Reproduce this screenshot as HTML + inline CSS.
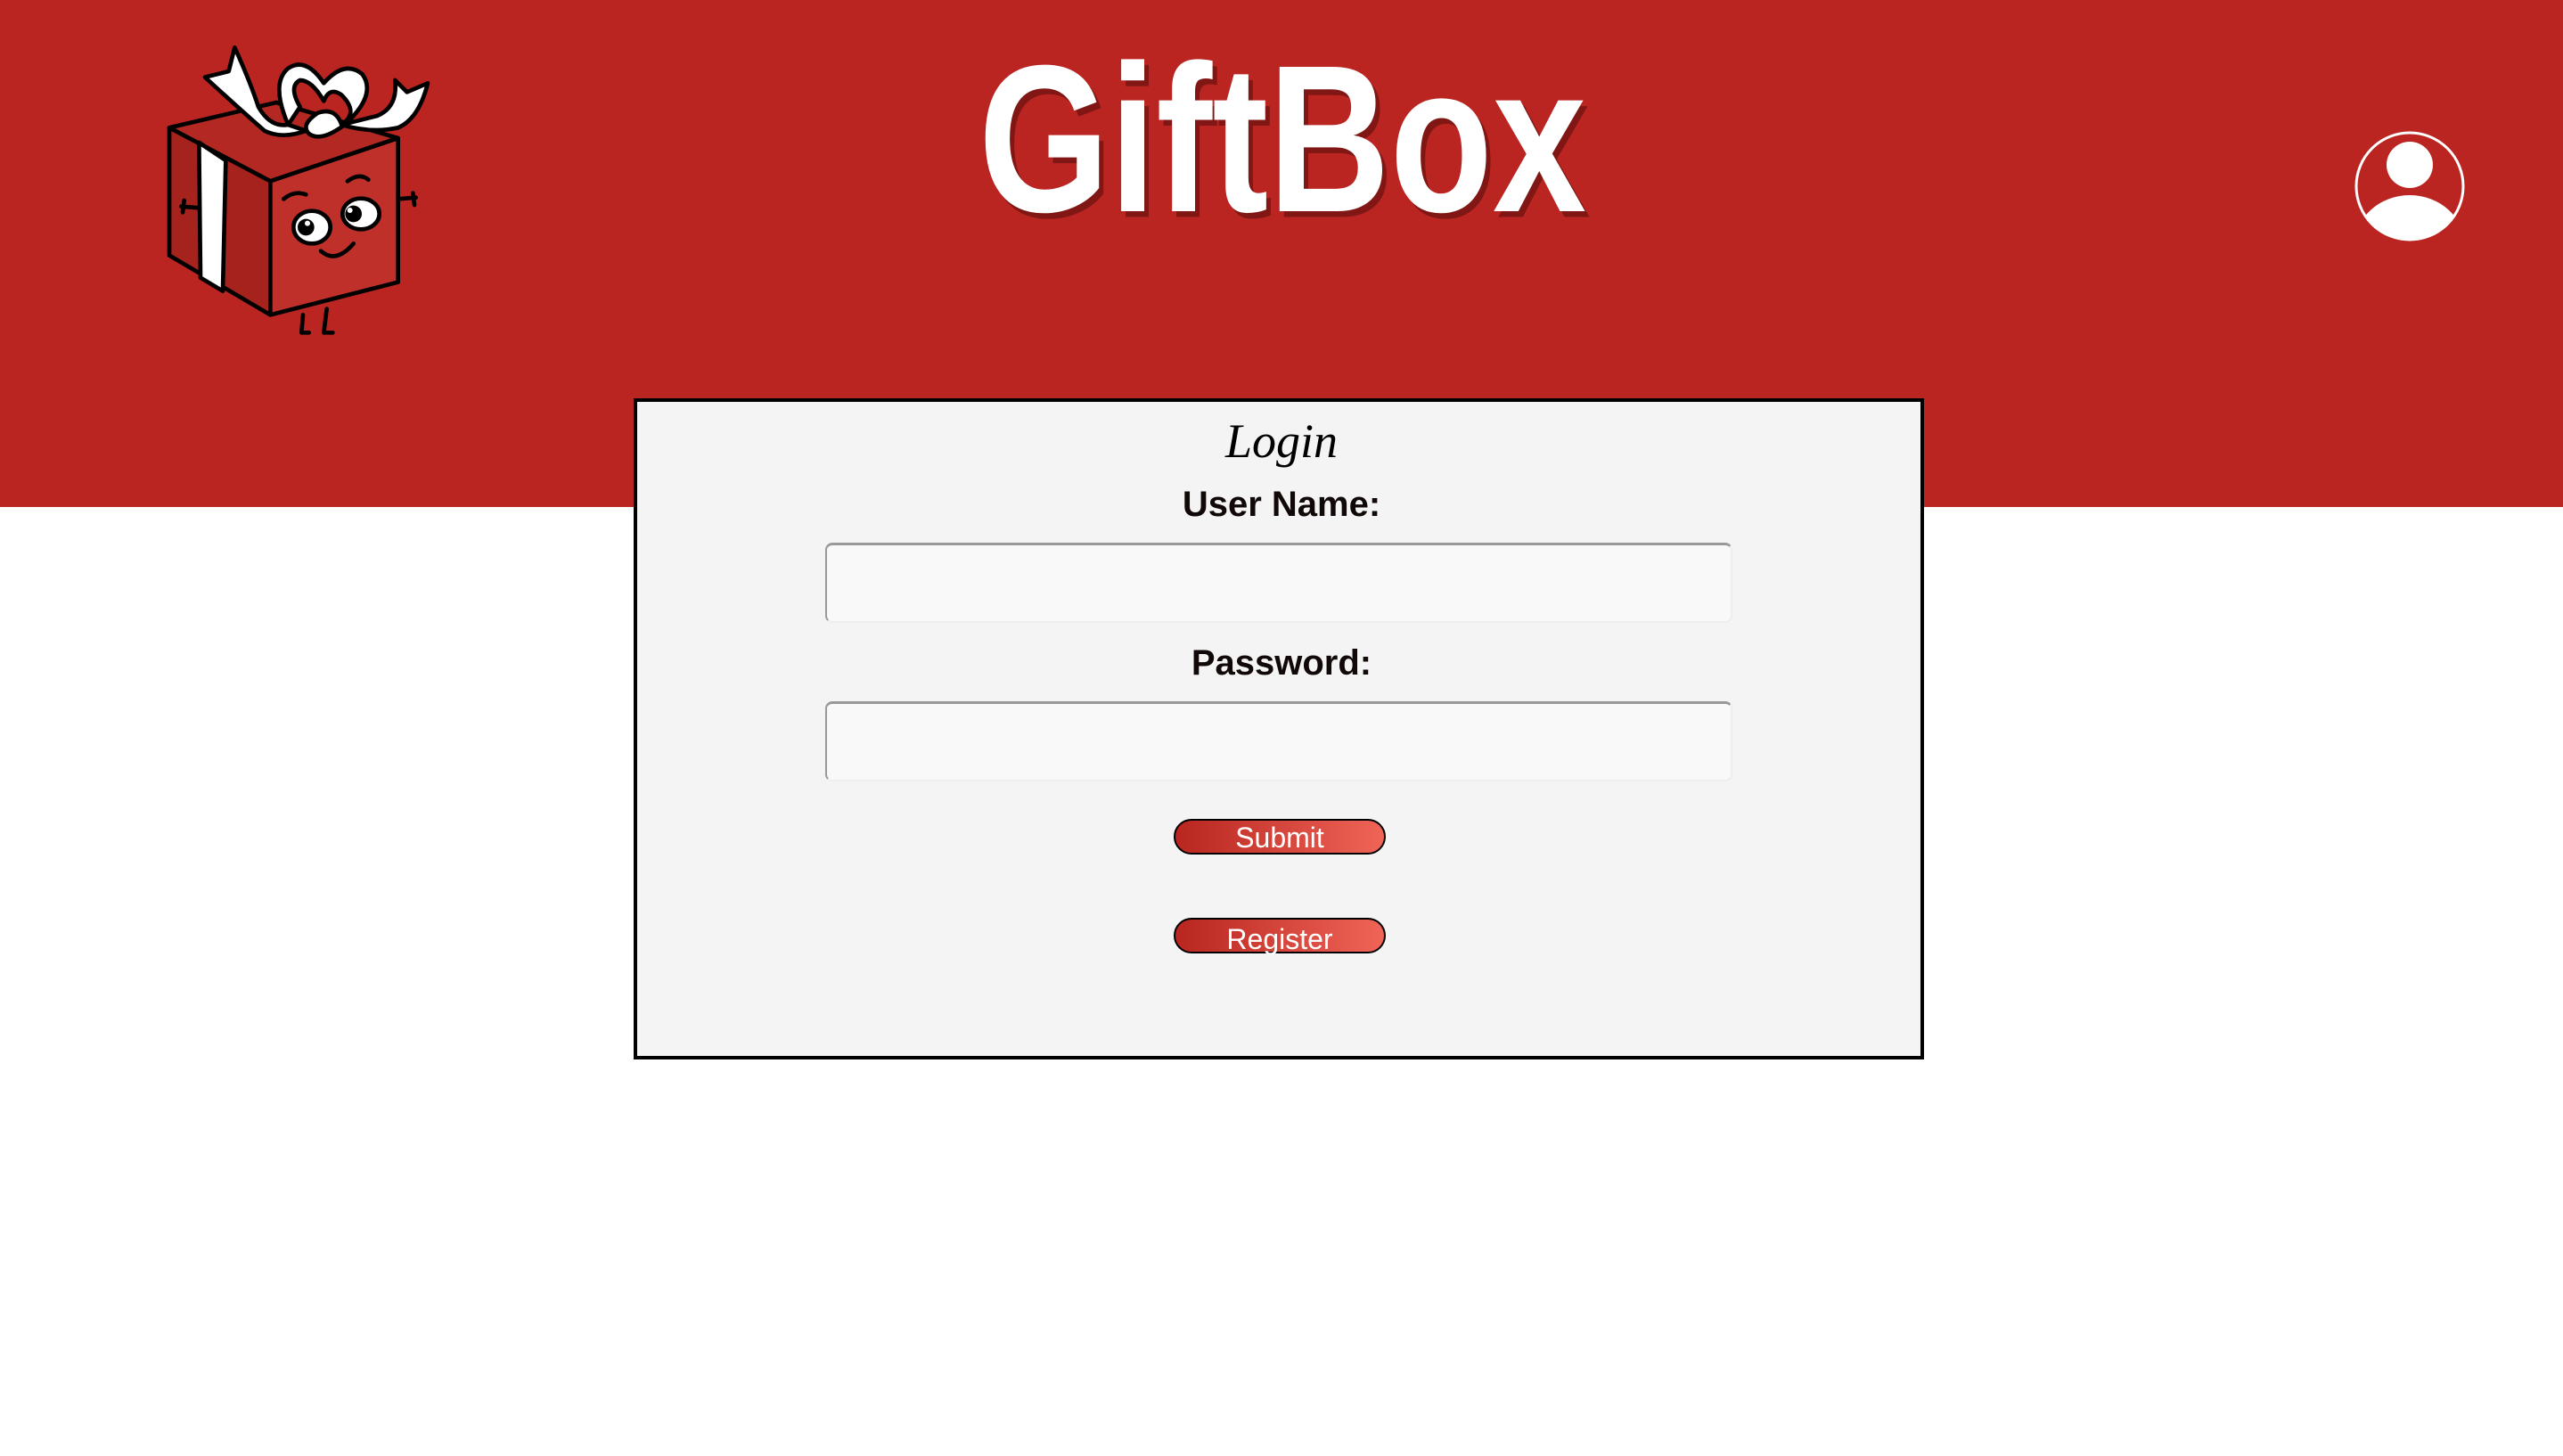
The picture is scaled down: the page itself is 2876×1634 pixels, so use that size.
<!DOCTYPE html>
<html><head><meta charset="utf-8"><style>
html,body{margin:0;padding:0;width:2876px;height:1634px;background:#fff;overflow:hidden;position:relative;font-family:"Liberation Sans",sans-serif}
.hdr{position:absolute;left:0;top:0;width:2876px;height:569px;background:#ba2521}
.box{position:absolute;background:#f4f4f4;border:4px solid #000;box-sizing:content-box;width:1440px;height:734px;left:711px;top:447px}
.lbl{position:absolute;left:0;width:100%;text-align:center;font-weight:bold;font-size:40px;color:#110808}
.inp{position:absolute;left:926px;width:1018px;height:90px;background:#f9f9f9;border-radius:8px;box-sizing:border-box;border-top:3px solid #999;border-left:2px solid #999;border-right:2px solid #eee;border-bottom:2px solid #eee}
.btn{position:absolute;left:1317px;width:238px;height:40px;box-sizing:border-box;border:2px solid #000;border-radius:20px;background:linear-gradient(90deg,#b8261f,#f06457);color:#fff;font-size:32px;text-align:center;line-height:38px;overflow:visible}
</style></head><body>
<div class="hdr"></div>

<svg style="position:absolute;left:170px;top:40px" width="340" height="350" viewBox="0 0 1020 1050">
<g stroke="#000" stroke-width="14" stroke-linejoin="round" stroke-linecap="round">
<polygon points="60,310 420,225 830,345 400,490" fill="#b32822"/>
<polygon points="60,310 400,490 400,940 60,740" fill="#a6221d"/>
<polygon points="400,490 830,345 830,830 400,940" fill="#c0302a"/>
<polygon points="160,360 250,420 240,860 165,815" fill="#fff"/>
<path d="M180,140 L260,120 L280,40 Q330,150 360,240 Q400,310 460,300 L520,320 Q440,350 380,320 Q300,250 180,140Z" fill="#fff"/>
<path d="M460,300 Q400,160 460,110 Q520,70 580,160 Q650,80 710,130 Q760,200 650,300 Q570,360 530,330 Q500,300 560,260 Q620,240 640,300 Q700,260 640,200 Q600,170 580,220 Q540,150 500,150 Q460,170 500,240 Z" fill="#fff"/>
<path d="M640,300 L760,270 Q830,240 820,150 L860,190 L930,160 Q900,280 830,310 Q740,330 640,300Z" fill="#fff"/>
<path d="M100,575 L160,580 M110,555 L105,595" fill="none"/>
<path d="M830,550 L890,545 M880,530 L885,570" fill="none"/>
<path d="M510,940 L505,1000 L530,1000 M590,920 L580,1000 L610,1000" fill="none"/>
<path d="M445,550 Q480,520 520,535 M660,490 Q700,460 730,485" fill="none"/>
<ellipse cx="540" cy="645" rx="62" ry="55" fill="#fff"/>
<ellipse cx="705" cy="600" rx="62" ry="52" fill="#fff"/>
<path d="M570,725 Q620,770 680,700" fill="none"/>
</g>
<circle cx="520" cy="645" r="28" fill="#000"/><circle cx="680" cy="600" r="28" fill="#000"/>
<circle cx="525" cy="632" r="9" fill="#fff"/><circle cx="668" cy="588" r="9" fill="#fff"/>
</svg>

<svg style="position:absolute;left:1090px;top:50px" width="700" height="260" viewBox="0 0 700 260">
<g transform="translate(0,187) scale(1,1.08) translate(0,-187)">
<text x="8" y="187" font-family="Liberation Sans Narrow, Liberation Sans, sans-serif" font-weight="bold" font-size="218" textLength="682" lengthAdjust="spacingAndGlyphs" fill="#5a0f0c" opacity="0.6" dx="5" dy="6">GiftBox</text>
<text x="8" y="187" font-family="Liberation Sans Narrow, Liberation Sans, sans-serif" font-weight="bold" font-size="218" textLength="682" lengthAdjust="spacingAndGlyphs" fill="#fff">GiftBox</text>
</g>
</svg>

<svg style="position:absolute;left:2640px;top:146px" width="128" height="128" viewBox="0 0 128 128">
<defs><clipPath id="c"><circle cx="64" cy="63" r="60"/></clipPath></defs>
<circle cx="64" cy="63" r="60" fill="none" stroke="#fff" stroke-width="3"/>
<circle cx="64" cy="39" r="26" fill="#fff"/>
<ellipse cx="64" cy="130" rx="62" ry="57" fill="#fff" clip-path="url(#c)"/>
</svg>

<div class="box"></div>
<div style="position:absolute;left:0;width:2876px;top:464px;text-align:center;font-family:'Liberation Serif',serif;font-style:italic;font-size:54px;color:#000">Login</div>
<div class="lbl" style="top:544px">User Name:</div>
<div class="inp" style="top:609px"></div>
<div class="lbl" style="top:722px">Password:</div>
<div class="inp" style="top:787px"></div>
<div class="btn" style="top:919px">Submit</div>
<div class="btn" style="top:1030px;line-height:44px">Register</div>
</body></html>
